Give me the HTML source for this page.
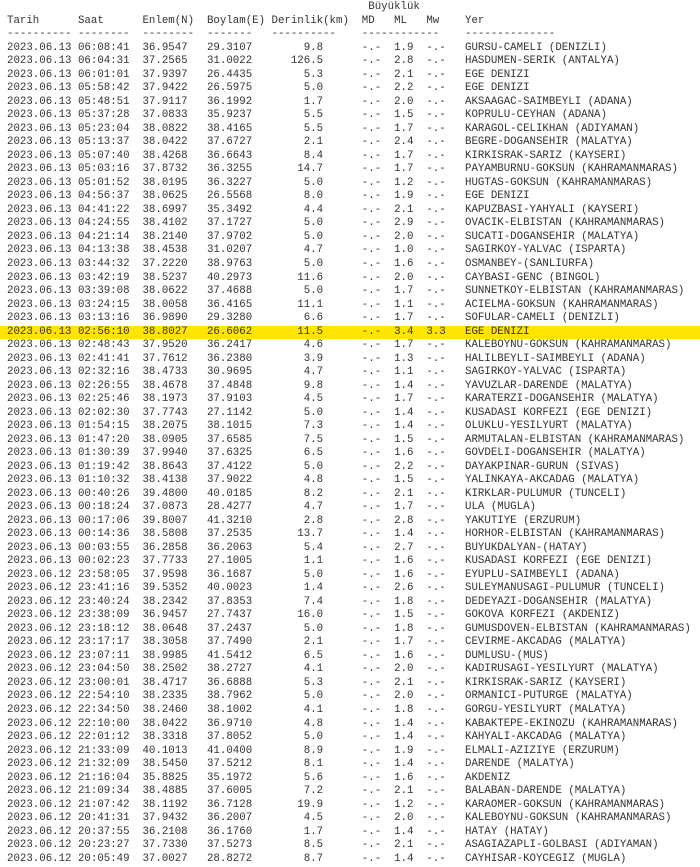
<!DOCTYPE html>
<html><head><meta charset="utf-8"><style>
html,body{margin:0;padding:0;background:#fff;width:700px;height:867px;overflow:hidden}
#w{position:absolute;top:1.2px;left:0;width:700px}
#w div{white-space:pre;font-family:"Liberation Mono","DejaVu Sans Mono",monospace;font-size:10.75px;line-height:13.53px;height:13.53px;color:#333;padding-left:7px}
#w div.h{background:#ffe500}
</style></head><body><div id="w">
<div>                                                        Büyüklük</div>
<div>Tarih      Saat      Enlem(N)  Boylam(E) Derinlik(km)  MD   ML   Mw    Yer</div>
<div>---------- --------  --------  -------   ----------    ------------    --------------</div>
<div>2023.06.13 06:08:41  36.9547   29.3107        9.8      -.-  1.9  -.-   GURSU-CAMELI (DENIZLI)</div>
<div>2023.06.13 06:04:31  37.2565   31.0022      126.5      -.-  2.8  -.-   HASDUMEN-SERIK (ANTALYA)</div>
<div>2023.06.13 06:01:01  37.9397   26.4435        5.3      -.-  2.1  -.-   EGE DENIZI</div>
<div>2023.06.13 05:58:42  37.9422   26.5975        5.0      -.-  2.2  -.-   EGE DENIZI</div>
<div>2023.06.13 05:48:51  37.9117   36.1992        1.7      -.-  2.0  -.-   AKSAAGAC-SAIMBEYLI (ADANA)</div>
<div>2023.06.13 05:37:28  37.0833   35.9237        5.5      -.-  1.5  -.-   KOPRULU-CEYHAN (ADANA)</div>
<div>2023.06.13 05:23:04  38.0822   38.4165        5.5      -.-  1.7  -.-   KARAGOL-CELIKHAN (ADIYAMAN)</div>
<div>2023.06.13 05:13:37  38.0422   37.6727        2.1      -.-  2.4  -.-   BEGRE-DOGANSEHIR (MALATYA)</div>
<div>2023.06.13 05:07:40  38.4268   36.6643        8.4      -.-  1.7  -.-   KIRKISRAK-SARIZ (KAYSERI)</div>
<div>2023.06.13 05:03:16  37.8732   36.3255       14.7      -.-  1.7  -.-   PAYAMBURNU-GOKSUN (KAHRAMANMARAS)</div>
<div>2023.06.13 05:01:52  38.0195   36.3227        5.0      -.-  1.2  -.-   HUGTAS-GOKSUN (KAHRAMANMARAS)</div>
<div>2023.06.13 04:56:37  38.0625   26.5568        8.0      -.-  1.9  -.-   EGE DENIZI</div>
<div>2023.06.13 04:41:22  38.6997   35.3492        4.4      -.-  2.1  -.-   KAPUZBASI-YAHYALI (KAYSERI)</div>
<div>2023.06.13 04:24:55  38.4102   37.1727        5.0      -.-  2.9  -.-   OVACIK-ELBISTAN (KAHRAMANMARAS)</div>
<div>2023.06.13 04:21:14  38.2140   37.9702        5.0      -.-  2.0  -.-   SUCATI-DOGANSEHIR (MALATYA)</div>
<div>2023.06.13 04:13:38  38.4538   31.0207        4.7      -.-  1.0  -.-   SAGIRKOY-YALVAC (ISPARTA)</div>
<div>2023.06.13 03:44:32  37.2220   38.9763        5.0      -.-  1.6  -.-   OSMANBEY-(SANLIURFA)</div>
<div>2023.06.13 03:42:19  38.5237   40.2973       11.6      -.-  2.0  -.-   CAYBASI-GENC (BINGOL)</div>
<div>2023.06.13 03:39:08  38.0622   37.4688        5.0      -.-  1.7  -.-   SUNNETKOY-ELBISTAN (KAHRAMANMARAS)</div>
<div>2023.06.13 03:24:15  38.0058   36.4165       11.1      -.-  1.1  -.-   ACIELMA-GOKSUN (KAHRAMANMARAS)</div>
<div>2023.06.13 03:13:16  36.9890   29.3280        6.6      -.-  1.7  -.-   SOFULAR-CAMELI (DENIZLI)</div>
<div class="h">2023.06.13 02:56:10  38.8027   26.6062       11.5      -.-  3.4  3.3   EGE DENIZI</div>
<div>2023.06.13 02:48:43  37.9520   36.2417        4.6      -.-  1.7  -.-   KALEBOYNU-GOKSUN (KAHRAMANMARAS)</div>
<div>2023.06.13 02:41:41  37.7612   36.2380        3.9      -.-  1.3  -.-   HALILBEYLI-SAIMBEYLI (ADANA)</div>
<div>2023.06.13 02:32:16  38.4733   30.9695        4.7      -.-  1.1  -.-   SAGIRKOY-YALVAC (ISPARTA)</div>
<div>2023.06.13 02:26:55  38.4678   37.4848        9.8      -.-  1.4  -.-   YAVUZLAR-DARENDE (MALATYA)</div>
<div>2023.06.13 02:25:46  38.1973   37.9103        4.5      -.-  1.7  -.-   KARATERZI-DOGANSEHIR (MALATYA)</div>
<div>2023.06.13 02:02:30  37.7743   27.1142        5.0      -.-  1.4  -.-   KUSADASI KORFEZI (EGE DENIZI)</div>
<div>2023.06.13 01:54:15  38.2075   38.1015        7.3      -.-  1.4  -.-   OLUKLU-YESILYURT (MALATYA)</div>
<div>2023.06.13 01:47:20  38.0905   37.6585        7.5      -.-  1.5  -.-   ARMUTALAN-ELBISTAN (KAHRAMANMARAS)</div>
<div>2023.06.13 01:30:39  37.9940   37.6325        6.5      -.-  1.6  -.-   GOVDELI-DOGANSEHIR (MALATYA)</div>
<div>2023.06.13 01:19:42  38.8643   37.4122        5.0      -.-  2.2  -.-   DAYAKPINAR-GURUN (SIVAS)</div>
<div>2023.06.13 01:10:32  38.4138   37.9022        4.8      -.-  1.5  -.-   YALINKAYA-AKCADAG (MALATYA)</div>
<div>2023.06.13 00:40:26  39.4800   40.0185        8.2      -.-  2.1  -.-   KIRKLAR-PULUMUR (TUNCELI)</div>
<div>2023.06.13 00:18:24  37.0873   28.4277        4.7      -.-  1.7  -.-   ULA (MUGLA)</div>
<div>2023.06.13 00:17:06  39.8007   41.3210        2.8      -.-  2.8  -.-   YAKUTIYE (ERZURUM)</div>
<div>2023.06.13 00:14:36  38.5808   37.2535       13.7      -.-  1.4  -.-   HORHOR-ELBISTAN (KAHRAMANMARAS)</div>
<div>2023.06.13 00:03:55  36.2858   36.2063        5.4      -.-  2.7  -.-   BUYUKDALYAN-(HATAY)</div>
<div>2023.06.13 00:02:23  37.7733   27.1005        1.1      -.-  1.6  -.-   KUSADASI KORFEZI (EGE DENIZI)</div>
<div>2023.06.12 23:58:05  37.9598   36.1687        5.0      -.-  1.6  -.-   EYUPLU-SAIMBEYLI (ADANA)</div>
<div>2023.06.12 23:41:16  39.5352   40.0023        1.4      -.-  2.6  -.-   SULEYMANUSAGI-PULUMUR (TUNCELI)</div>
<div>2023.06.12 23:40:24  38.2342   37.8353        7.4      -.-  1.8  -.-   DEDEYAZI-DOGANSEHIR (MALATYA)</div>
<div>2023.06.12 23:38:09  36.9457   27.7437       16.0      -.-  1.5  -.-   GOKOVA KORFEZI (AKDENIZ)</div>
<div>2023.06.12 23:18:12  38.0648   37.2437        5.0      -.-  1.8  -.-   GUMUSDOVEN-ELBISTAN (KAHRAMANMARAS)</div>
<div>2023.06.12 23:17:17  38.3058   37.7490        2.1      -.-  1.7  -.-   CEVIRME-AKCADAG (MALATYA)</div>
<div>2023.06.12 23:07:11  38.9985   41.5412        6.5      -.-  1.6  -.-   DUMLUSU-(MUS)</div>
<div>2023.06.12 23:04:50  38.2502   38.2727        4.1      -.-  2.0  -.-   KADIRUSAGI-YESILYURT (MALATYA)</div>
<div>2023.06.12 23:00:01  38.4717   36.6888        5.3      -.-  2.1  -.-   KIRKISRAK-SARIZ (KAYSERI)</div>
<div>2023.06.12 22:54:10  38.2335   38.7962        5.0      -.-  2.0  -.-   ORMANICI-PUTURGE (MALATYA)</div>
<div>2023.06.12 22:34:50  38.2460   38.1002        4.1      -.-  1.8  -.-   GORGU-YESILYURT (MALATYA)</div>
<div>2023.06.12 22:10:00  38.0422   36.9710        4.8      -.-  1.4  -.-   KABAKTEPE-EKINOZU (KAHRAMANMARAS)</div>
<div>2023.06.12 22:01:12  38.3318   37.8052        5.0      -.-  1.4  -.-   KAHYALI-AKCADAG (MALATYA)</div>
<div>2023.06.12 21:33:09  40.1013   41.0400        8.9      -.-  1.9  -.-   ELMALI-AZIZIYE (ERZURUM)</div>
<div>2023.06.12 21:32:09  38.5450   37.5212        8.1      -.-  1.4  -.-   DARENDE (MALATYA)</div>
<div>2023.06.12 21:16:04  35.8825   35.1972        5.6      -.-  1.6  -.-   AKDENIZ</div>
<div>2023.06.12 21:09:34  38.4885   37.6005        7.2      -.-  2.1  -.-   BALABAN-DARENDE (MALATYA)</div>
<div>2023.06.12 21:07:42  38.1192   36.7128       19.9      -.-  1.2  -.-   KARAOMER-GOKSUN (KAHRAMANMARAS)</div>
<div>2023.06.12 20:41:31  37.9432   36.2007        4.5      -.-  2.0  -.-   KALEBOYNU-GOKSUN (KAHRAMANMARAS)</div>
<div>2023.06.12 20:37:55  36.2108   36.1760        1.7      -.-  1.4  -.-   HATAY (HATAY)</div>
<div>2023.06.12 20:23:27  37.7330   37.5273        8.5      -.-  2.1  -.-   ASAGIAZAPLI-GOLBASI (ADIYAMAN)</div>
<div>2023.06.12 20:05:49  37.0027   28.8272        8.7      -.-  1.4  -.-   CAYHISAR-KOYCEGIZ (MUGLA)</div>
</div></body></html>
